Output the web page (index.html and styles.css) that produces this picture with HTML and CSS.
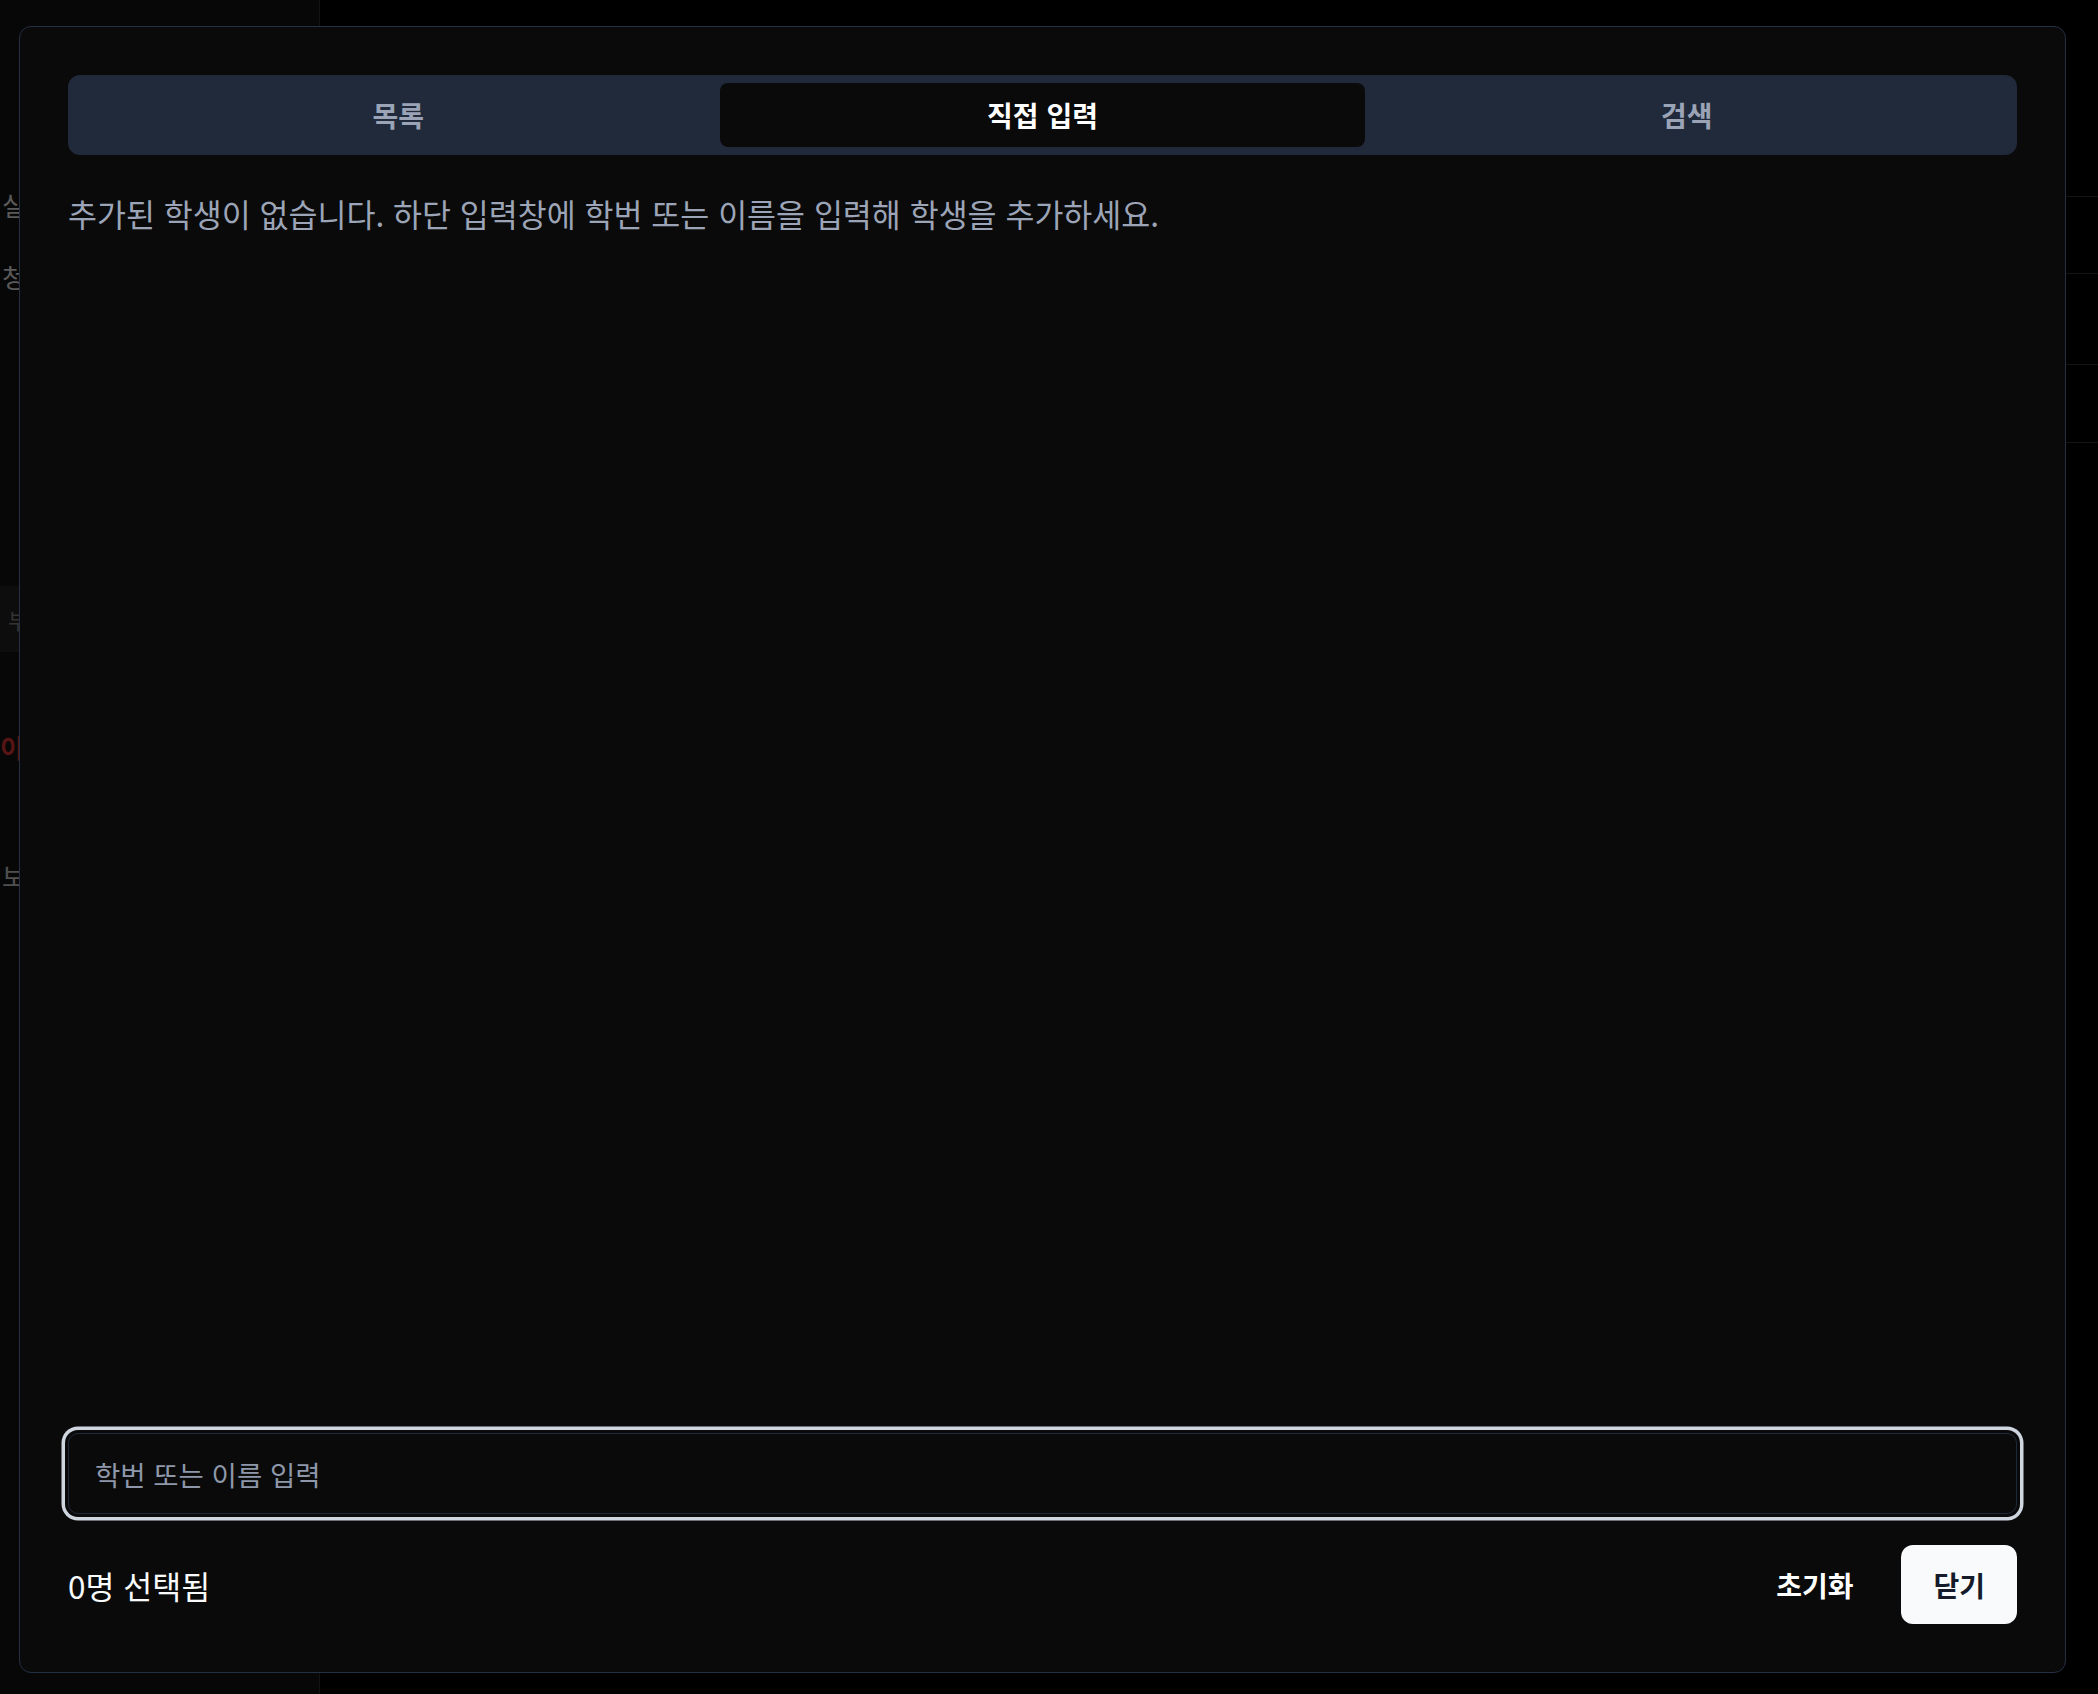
FILE: index.html
```html
<!DOCTYPE html>
<html lang="ko">
<head>
<meta charset="utf-8">
<title>학생 추가</title>
<link rel="stylesheet" href="styles.css">
</head>
<body>
<div class="page">
  <aside class="sidebar">
    <div class="side-item side-a">실</div>
    <div class="side-item side-b">청</div>
    <div class="side-band"><span>부</span></div>
    <div class="side-item side-red">이</div>
    <div class="side-item side-c">보</div>
  </aside>
  <main class="main">
    <div class="row row-1"></div>
    <div class="row row-2"></div>
    <div class="row row-3"></div>
    <div class="row row-4"></div>
  </main>
</div>
<div class="dialog" role="dialog">
  <div class="tabs">
    <button class="tab">목록</button>
    <button class="tab active">직접 입력</button>
    <button class="tab">검색</button>
  </div>
  <p class="empty">추가된 학생이 없습니다. 하단 입력창에 학번 또는 이름을 입력해 학생을 추가하세요.</p>
  <div class="spacer"></div>
  <input class="field" type="text" placeholder="학번 또는 이름 입력">
  <div class="footer">
    <span class="count">0명 선택됨</span>
    <div class="actions">
      <button class="btn btn-ghost">초기화</button>
      <button class="btn btn-primary">닫기</button>
    </div>
  </div>
</div>
</body>
</html>
```
FILE: styles.css
```css
* { box-sizing: border-box; }
html, body { margin: 0; padding: 0; }
body {
  background: #000;
  font-family: "Noto Sans CJK KR", "Noto Sans", sans-serif;
  overflow: hidden;
  width: 2098px;
  height: 1694px;
}
.page { display: flex; height: 1694px; }
.sidebar {
  width: 320px;
  flex: none;
  background: #070707;
  border-right: 1px solid #131313;
  padding-top: 187px;
  display: flex;
  flex-direction: column;
}
.side-item {
  font-size: 26px;
  line-height: 36px;
  height: 36px;
  padding-left: 2px;
  color: #5a5a5a;
  white-space: nowrap;
}
.side-b { margin-top: 36px; }
.side-band {
  margin-top: 291px;
  height: 66px;
  background: #0d0d0d;
  display: flex;
  align-items: center;
  padding-left: 8px;
  font-size: 22px;
  color: #333;
}
.side-red { margin-top: 77px; color: #561414; font-weight: 700; padding-left: 0; }
.side-c { margin-top: 93px; color: #505050; }
.main { flex: 1; }
.row { border-bottom: 1px solid #151515; }
.row-1 { height: 197px; }
.row-2 { height: 77px; }
.row-3 { height: 91px; }
.row-4 { height: 78px; }

.dialog {
  position: fixed;
  left: 19px;
  top: 26px;
  width: 2047px;
  height: 1647px;
  background: #0a0a0a;
  border: 1px solid #243044;
  border-radius: 12px;
  padding: 48px;
  display: flex;
  flex-direction: column;
}
.tabs {
  display: grid;
  grid-template-columns: repeat(3, 1fr);
  height: 80px;
  padding: 8px;
  background: #202a3b;
  border-radius: 12px;
  flex: none;
}
.tab {
  border: 0;
  background: transparent;
  font-family: inherit;
  font-size: 28px;
  font-weight: 600;
  color: #9aa4b6;
  border-radius: 8px;
  padding: 0;
}
.tab.active {
  background: #0a0a0a;
  color: #fff;
  font-weight: 700;
}
.empty {
  margin: 36px 0 0;
  font-size: 31.5px;
  line-height: 44px;
  color: #9ca5b7;
}
.spacer { flex: 1; }
.field {
  flex: none;
  height: 81px;
  width: 100%;
  border: 1px solid #1e293b;
  border-radius: 10px;
  background: #0a0a0a;
  padding: 0 26px;
  font-family: inherit;
  font-size: 27.5px;
  color: #e5e7eb;
  outline: none;
  box-shadow: 0 0 0 3px #0a0a0a, 0 0 0 6.5px #cfd6e0;
}
.field::placeholder { color: #8e98aa; }
.footer {
  flex: none;
  margin-top: 31px;
  height: 79px;
  display: flex;
  justify-content: space-between;
  align-items: center;
}
.count {
  font-size: 31.5px;
  font-weight: 400;
  color: #f8fafc;
}
.actions { display: flex; gap: 16px; height: 100%; }
.btn {
  height: 79px;
  border: 0;
  border-radius: 12px;
  padding: 0 32px;
  font-family: inherit;
  font-size: 28px;
  font-weight: 700;
}
.btn-ghost { background: transparent; color: #fff; }
.btn-primary { background: #f8fafc; color: #151b2a; }
```
